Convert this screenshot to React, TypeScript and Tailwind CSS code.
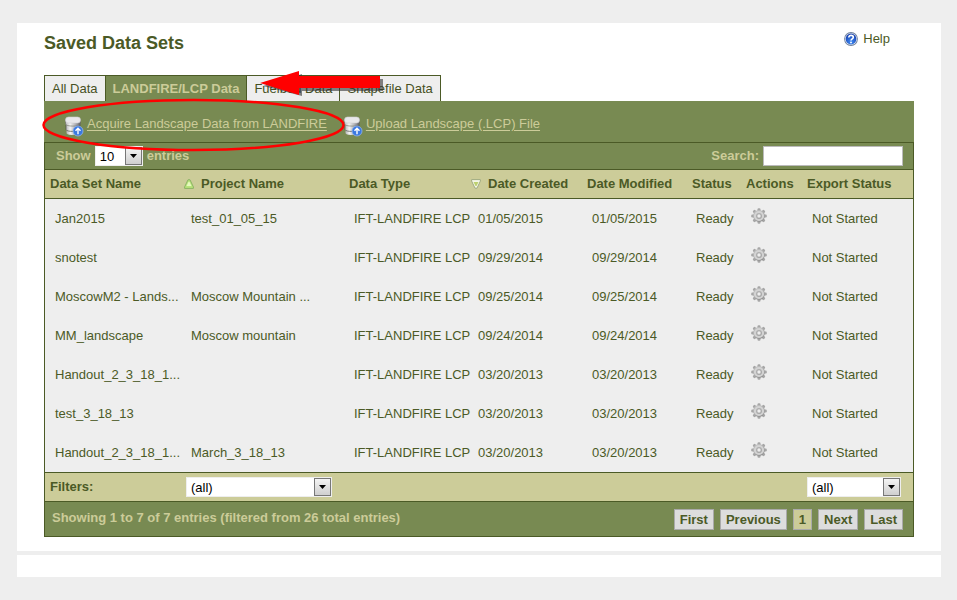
import type { ReactNode } from "react";

const rows = [
  ["Jan2015", "test_01_05_15", "01/05/2015"],
  ["snotest", "", "09/29/2014"],
  ["MoscowM2 - Lands...", "Moscow Mountain ...", "09/25/2014"],
  ["MM_landscape", "Moscow mountain", "09/24/2014"],
  ["Handout_2_3_18_1...", "", "03/20/2013"],
  ["test_3_18_13", "", "03/20/2013"],
  ["Handout_2_3_18_1...", "March_3_18_13", "03/20/2013"],
];

function HelpIcon() {
  return (
    <svg width="14" height="14" viewBox="0 0 14 14" aria-hidden="true">
      <defs>
        <radialGradient id="help" cx="50%" cy="75%" r="70%">
          <stop offset="0" stopColor="#3f8cf5" />
          <stop offset="1" stopColor="#173fae" />
        </radialGradient>
      </defs>
      <circle cx="7" cy="7" r="6.9" fill="#6d7f9c" />
      <circle cx="7" cy="7" r="6.1" fill="#dfe6f0" />
      <circle cx="7" cy="7" r="5.4" fill="url(#help)" />
      <path d="M4.800 5.400c0-2.700 4.500-2.600 4.500-.1C9.300 6.900 7 6.800 7 8.600" fill="none" stroke="#fff" strokeWidth="1.600" />
      <circle cx="7" cy="10.400" r=".95" fill="#fff" />
    </svg>
  );
}

function DatabaseIcon() {
  return (
    <svg width="20" height="22" viewBox="0 0 20 22" aria-hidden="true">
      <defs>
        <linearGradient id="disk" x1="0" x2="1">
          <stop offset="0" stopColor="#b5b5b8" />
          <stop offset=".3" stopColor="#f4f4f4" />
          <stop offset=".65" stopColor="#b4b4b8" />
          <stop offset="1" stopColor="#5c5c62" />
        </linearGradient>
      </defs>
      <path d="M2.500 14.500v3.500c0 2.600 12 2.600 13 0v-3.500z" fill="url(#disk)" />
      <path d="M2 9.500v5c0 2.600 14 2.600 14 0v-5z" fill="url(#disk)" stroke="#4f5247" strokeWidth=".7" />
      <path d="M1.500 4.500v4.500c0 2.800 15 2.800 15 0V4.500z" fill="url(#disk)" stroke="#6b6e62" strokeWidth=".6" />
      <rect x="1.500" y="2" width="15" height="6" rx="3" fill="#e8e8ea" stroke="#cfcfd2" strokeWidth=".6" />
      <circle cx="14" cy="16" r="5" fill="#3a78e0" stroke="#8fb4ee" strokeWidth=".8" />
      <path d="M14 19.300v-5.500M11.500 15.800l2.500-2.600 2.500 2.600" fill="none" stroke="#fff" strokeWidth="1.400" />
    </svg>
  );
}

const teeth = [0, 45, 90, 135];

function GearIcon() {
  return (
    <svg width="16" height="16" viewBox="0 0 16 16" aria-hidden="true">
      <defs>
        <linearGradient id="gear" gradientUnits="userSpaceOnUse" x1="4" y1="1" x2="12" y2="15">
          <stop offset="0" stopColor="#c6c6c6" />
          <stop offset=".5" stopColor="#adadad" />
          <stop offset="1" stopColor="#858585" />
        </linearGradient>
      </defs>
      {teeth.map((angle) => (
        <rect key={angle} x="6.500" y=".2" width="3" height="15.600" rx="1.200" fill="#a6a6a6" transform={`rotate(${angle} 8 8)`} />
      ))}
      <circle cx="8" cy="8" r="5.900" fill="url(#gear)" />
      <circle cx="8" cy="8" r="4" fill="none" stroke="#d3d3d3" strokeWidth="2.200" />
      <circle cx="8" cy="8" r="2.200" fill="#eee" stroke="#a5a5a5" strokeWidth=".9" />
    </svg>
  );
}

function SortIcon({ down = false }: { down?: boolean }) {
  return (
    <svg width="10" height="10" viewBox="0 0 10 10" className={down ? "rotate-180" : ""} aria-hidden="true">
      <path d="M4 .8h2L9.400 8v1.400H.6V8z" fill={down ? "#f4f7e6" : "#b9e57c"} stroke={down ? "#a0aa80" : "#8cb265"} strokeWidth="1" />
      <path d="M4.500 3h1L7.500 7h-5z" fill={down ? "#bcd070" : "#e6f9bd"} />
    </svg>
  );
}

function Dropdown({ id, label, options, className }: { id: string; label?: string; options: string[]; className: string }) {
  return (
    <span className={`inline-grid h-5 items-center border border-[#eee] bg-white align-middle ${className}`}>
      <select
        id={id}
        aria-label={label}
        className="col-start-1 row-start-1 h-[18px] w-full appearance-none bg-transparent pl-1 text-[13px] font-normal text-black outline-none"
      >
        {options.map((o) => (
          <option key={o}>{o}</option>
        ))}
      </select>
      <span className="pointer-events-none col-start-1 row-start-1 flex h-[18px] w-[17px] items-center justify-center justify-self-end border border-[#777] bg-linear-to-b from-[#f4f4f4] to-[#cfcfcf]">
        <svg width="7" height="4" viewBox="0 0 7 4" aria-hidden="true">
          <path d="M0 0h7L3.500 4z" fill="#000" />
        </svg>
      </span>
    </span>
  );
}

function Tab({ children, active = false }: { children: ReactNode; active?: boolean }) {
  return (
    <button
      type="button"
      role="tab"
      aria-selected={active}
      className={`-mr-px h-[26px] border border-b-0 border-[#4b5a26] px-[7px] ${
        active ? "bg-[#788a52] font-bold text-[#cccc99]" : "bg-[#eee] text-[#465023]"
      }`}
    >
      {children}
    </button>
  );
}

function ToolLink({ href, children }: { href: string; children: ReactNode }) {
  return (
    <a href={href} className="flex items-center gap-[3px]">
      <span className="pt-2">
        <DatabaseIcon />
      </span>
      <span className="pt-1 underline underline-offset-2">{children}</span>
    </a>
  );
}

function PageButton({ children, current = false }: { children: ReactNode; current?: boolean }) {
  return (
    <button
      type="button"
      className={`h-[21px] border border-[#aaa] px-[5px] leading-[19px] font-bold text-[#4b5a26] ${
        current ? "bg-[#cccc99]" : "bg-[#ddd]"
      }`}
    >
      {children}
    </button>
  );
}

function Heading({ children, sort }: { children: ReactNode; sort?: "up" | "down" }) {
  return (
    <th scope="col" className="border-y border-[#4b5a26] pb-px text-left font-bold whitespace-nowrap">
      <span className={`flex items-center ${sort ? "gap-[7px] pl-[3px]" : "pl-[5px]"}`}>
        {sort && <SortIcon down={sort === "down"} />}
        {children}
      </span>
    </th>
  );
}

function Annotations() {
  return (
    <svg className="pointer-events-none absolute top-0 left-0" width="400" height="160" viewBox="0 0 400 160" aria-hidden="true">
      <path d="M263 86l39-12v5h81v12h-81v5z" fill="#333" opacity=".6" />
      <path d="M260 83l39-12v5h81v12h-81v7z" fill="#f00" />
      <ellipse cx="193.500" cy="125" rx="150" ry="25" fill="none" stroke="#f00" strokeWidth="2.500" />
    </svg>
  );
}

export default function App() {
  return (
    <div className="relative min-h-screen bg-[#eee] px-4 pt-[23px] font-['Liberation_Sans',Arial,sans-serif] text-[13px] text-[#4b5a26]">
      <main className="ml-px bg-white px-[27px] pb-[14px]">
        <header className="flex h-[52px] items-start justify-between pr-6">
          <h1 className="pt-2 text-lg leading-6 font-bold">Saved Data Sets</h1>
          <a href="#help" className="flex items-center gap-[5px] pt-[5px] leading-[21px]">
            <HelpIcon />
            Help
          </a>
        </header>

        <div role="tablist" className="flex">
          <Tab>All Data</Tab>
          <Tab active>LANDFIRE/LCP Data</Tab>
          <Tab>Fuelbed Data</Tab>
          <Tab>Shapefile Data</Tab>
        </div>

        <nav className="flex h-[41px] items-center gap-4 bg-[#788a52] pl-5 text-[#cccc99]">
          <ToolLink href="#acquire">Acquire Landscape Data from LANDFIRE</ToolLink>
          <ToolLink href="#upload">Upload Landscape (.LCP) File</ToolLink>
        </nav>

        <section className="border border-[#4b5a26] bg-[#788a52]">
          <div className="flex h-[26px] items-center justify-between pr-[10px] pl-[11px] font-bold text-[#cccc99]">
            <div className="flex items-center gap-1">
              <label htmlFor="length">Show</label>
              <Dropdown id="length" options={["10", "25", "50"]} className="w-12" />
              <span>entries</span>
            </div>
            <div className="flex items-center gap-1">
              <label htmlFor="search">Search:</label>
              <input id="search" type="text" className="h-5 w-[140px] border border-[#bbb] bg-white px-1 font-normal text-black outline-none" />
            </div>
          </div>

          <table className="w-full table-fixed border-separate border-spacing-0">
            <colgroup>
              <col className="w-[136px]" />
              <col className="w-[163px]" />
              <col className="w-[124px]" />
              <col className="w-[114px]" />
              <col className="w-[105px]" />
              <col className="w-[54px]" />
              <col className="w-[61px]" />
              <col />
            </colgroup>
            <thead>
              <tr className="h-[30px] bg-[#cccc99]">
                <Heading>Data Set Name</Heading>
                <Heading sort="up">Project Name</Heading>
                <Heading>Data Type</Heading>
                <Heading sort="down">Date Created</Heading>
                <Heading>Date Modified</Heading>
                <Heading>Status</Heading>
                <Heading>Actions</Heading>
                <Heading>Export Status</Heading>
              </tr>
            </thead>
            <tbody className="bg-[#eee]">
              {rows.map(([name, project, date], i) => (
                <tr key={i} className="h-[39px] whitespace-nowrap">
                  <td className="pl-[10px]">{name}</td>
                  <td className="pl-[10px]">{project}</td>
                  <td className="pl-[10px]">IFT-LANDFIRE LCP</td>
                  <td className="pl-[10px]">{date}</td>
                  <td className="pl-[10px]">{date}</td>
                  <td className="pl-[9px]">Ready</td>
                  <td className="pb-[6px] pl-[10px]">
                    <button type="button" aria-label="Actions" className="block">
                      <GearIcon />
                    </button>
                  </td>
                  <td className="pl-[10px]">Not Started</td>
                </tr>
              ))}
            </tbody>
            <tfoot>
              <tr className="h-[30px] bg-[#cccc99]">
                <th scope="row" className="border-y border-[#4b5a26] pl-[5px] text-left">Filters:</th>
                <td className="border-y border-[#4b5a26] pl-[5px]">
                  <Dropdown id="project" label="Project" options={["(all)"]} className="w-[146px]" />
                </td>
                <td colSpan={5} className="border-y border-[#4b5a26]" />
                <td className="border-y border-[#4b5a26] pl-[5px]">
                  <Dropdown id="export" label="Export status" options={["(all)"]} className="w-[94px]" />
                </td>
              </tr>
            </tfoot>
          </table>

          <div className="flex h-[34px] items-center justify-between pr-[10px] pl-[7px]">
            <p className="pb-[3px] font-bold text-[#cccc99]">Showing 1 to 7 of 7 entries (filtered from 26 total entries)</p>
            <div className="flex gap-[6px]">
              <PageButton>First</PageButton>
              <PageButton>Previous</PageButton>
              <PageButton current>1</PageButton>
              <PageButton>Next</PageButton>
              <PageButton>Last</PageButton>
            </div>
          </div>
        </section>
      </main>
      <footer className="mt-1 ml-px h-[22px] bg-white" />
      <Annotations />
    </div>
  );
}
